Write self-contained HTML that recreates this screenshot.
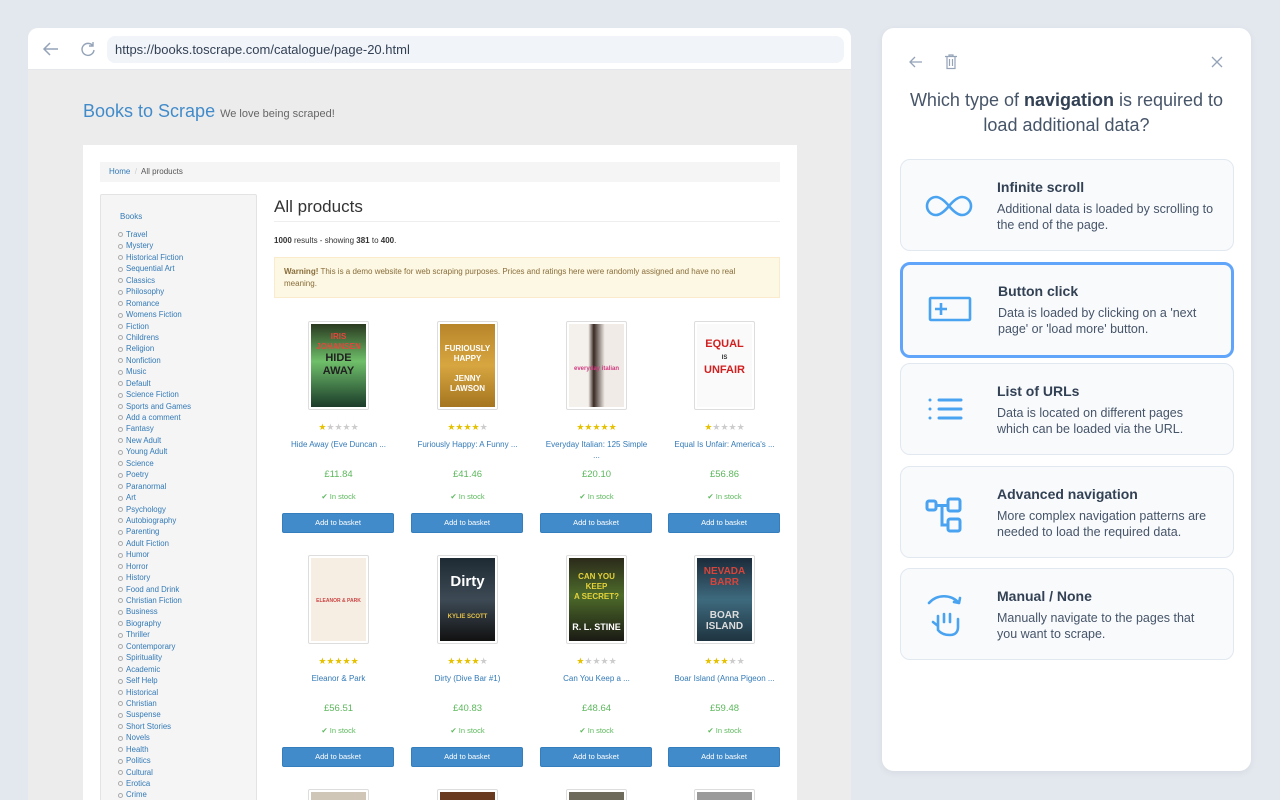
<!DOCTYPE html>
<html><head><meta charset="utf-8"><style>
*{box-sizing:border-box;margin:0;padding:0}
body{width:1280px;height:800px;overflow:hidden;background:#e3e8ef;font-family:"Liberation Sans",sans-serif;position:relative}
.abs{position:absolute}
#win{left:28px;top:28px;width:823px;height:772px;background:#ececec;border-radius:10px 10px 0 0;overflow:hidden}
#bar{left:0;top:0;width:823px;height:42px;background:#fff;border-bottom:1px solid #e5e7eb}
#url{left:79px;top:8px;width:737px;height:27px;border-radius:8px;background:#f1f4f8;font-size:13px;color:#334155;padding:6px 8px;line-height:15px}
#page{left:55px;top:117px;width:714px;height:655px;background:#fff;overflow:hidden}
.bc{left:17px;top:17px;width:680px;height:20px;background:#f5f5f5;font-size:8px;line-height:20px;padding-left:9px;color:#555}
.bc a{color:#337ab7}
#side{position:absolute;left:17px;top:49px;width:157px;height:700px;border:1px solid #e3e3e3;background:#f5f5f5;border-radius:2px}
#side .b{position:absolute;left:19px;top:17px;font-size:8px;color:#337ab7}
#side ul{position:absolute;left:17px;top:34px;list-style:none}
#side li{font-size:7.8px;line-height:11.43px;color:#337ab7;white-space:nowrap}
#side li:before{content:"";display:inline-block;width:3px;height:3px;border:0.6px solid #aaa;border-radius:50%;margin-right:3px;vertical-align:middle}
.h1{left:191px;top:52px;font-size:17px;color:#333}
.hr{left:191px;top:76px;width:506px;height:1px;background:#eee}
.res{left:191px;top:91px;font-size:8px;color:#333}
.warn{left:191px;top:112px;width:506px;height:41px;background:#fcf8e3;border:1px solid #faebcc;font-size:8px;color:#8a6d3b;padding:8px 9px;line-height:12px}
.prod{position:absolute;width:129px;text-align:center}
.cov{position:absolute;left:34px;width:61px;height:89px;border:1px solid #ddd;border-radius:2px;padding:2px;background:#fff}
.cov div{width:100%;height:100%;overflow:hidden;font-size:8px;font-weight:bold;line-height:10px;padding-top:8px}
.st{position:absolute;top:101px;width:100%;font-size:9px;color:#ccc}
.st b{color:#e6c100;font-weight:normal}
.tt{position:absolute;top:118px;width:100%;font-size:8px;color:#337ab7;white-space:nowrap;line-height:11px}
.pr{position:absolute;top:148px;width:100%;font-size:9.5px;color:#5cb85c}
.is{position:absolute;top:171px;width:100%;font-size:7.5px;color:#5cb85c}
.btn{position:absolute;top:192px;left:8px;width:112px;height:20px;background:#428bca;border-radius:2px;color:#fff;font-size:7.5px;line-height:18px;border:1px solid #357ebd}
#panel{left:882px;top:28px;width:369px;height:743px;background:#fff;border-radius:12px;box-shadow:0 2px 8px rgba(0,0,0,.06)}
.q{left:0;top:60px;width:369px;text-align:center;font-size:18px;line-height:25px;color:#475569}
.q b{color:#334155}
.card{position:absolute;left:18px;width:334px;height:92px;background:#f8fafc;border:1px solid #e2e8f0;border-radius:10px}
.card.sel{border:3px solid #60a5fa;height:96px}
.card h3{position:absolute;left:96px;top:19px;font-size:14px;color:#334155}
.card p{position:absolute;left:96px;top:41px;font-size:12.5px;line-height:16px;color:#475569;width:218px}
.card svg{position:absolute;left:20px;top:21px}
</style></head><body>
<div id="win" class="abs">
 <div id="bar" class="abs">
  <svg class="abs" style="left:14px;top:13px" width="18" height="16" viewBox="0 0 18 16"><path d="M16 8H2M8 2L2 8l6 6" fill="none" stroke="#94a3b8" stroke-width="1.5"/></svg>
  <svg class="abs" style="left:52px;top:13px" width="16" height="16" viewBox="0 0 16 16"><path d="M13 5A6 6 0 1 0 14 9M13 1v4H9" fill="none" stroke="#94a3b8" stroke-width="1.4"/></svg>
  <div id="url" class="abs">https://books.toscrape.com/catalogue/page-20.html</div>
 </div>
 <div class="abs" style="left:55px;top:73px;font-size:18px;color:#428bca">Books to Scrape <span style="font-size:11px;color:#666">We love being scraped!</span></div>
 <div id="page" class="abs">
  <div class="bc abs"><a>Home</a> <span style="color:#ccc">&nbsp;/&nbsp;</span> All products</div>
  <div id="side"><div class="b">Books</div><ul>
  <li>Travel</li><li>Mystery</li><li>Historical Fiction</li><li>Sequential Art</li><li>Classics</li><li>Philosophy</li><li>Romance</li><li>Womens Fiction</li><li>Fiction</li><li>Childrens</li><li>Religion</li><li>Nonfiction</li><li>Music</li><li>Default</li><li>Science Fiction</li><li>Sports and Games</li><li>Add a comment</li><li>Fantasy</li><li>New Adult</li><li>Young Adult</li><li>Science</li><li>Poetry</li><li>Paranormal</li><li>Art</li><li>Psychology</li><li>Autobiography</li><li>Parenting</li><li>Adult Fiction</li><li>Humor</li><li>Horror</li><li>History</li><li>Food and Drink</li><li>Christian Fiction</li><li>Business</li><li>Biography</li><li>Thriller</li><li>Contemporary</li><li>Spirituality</li><li>Academic</li><li>Self Help</li><li>Historical</li><li>Christian</li><li>Suspense</li><li>Short Stories</li><li>Novels</li><li>Health</li><li>Politics</li><li>Cultural</li><li>Erotica</li><li>Crime</li></ul></div>
  <div class="h1 abs">All products</div>
  <div class="hr abs"></div>
  <div class="res abs"><b>1000</b> results - showing <b>381</b> to <b>400</b>.</div>
  <div class="warn abs"><b>Warning!</b> This is a demo website for web scraping purposes. Prices and ratings here were randomly assigned and have no real meaning.</div>

  <div class="prod" style="left:191px;top:176px"><div class="cov" style="top:0"><div style="background:linear-gradient(#2a3a20,#6fbf6a 45%,#1b3b2a);color:#e8453c">IRIS<br>JOHANSEN<br><span style="color:#222;font-size:11px;line-height:13px">HIDE<br>AWAY</span></div></div><div class="st"><b>★</b>★★★★</div><div class="tt">Hide Away (Eve Duncan ...</div><div class="pr">£11.84</div><div class="is">✔ In stock</div><div class="btn">Add to basket</div></div>
  <div class="prod" style="left:320px;top:176px"><div class="cov" style="top:0"><div style="background:linear-gradient(#b8862a,#d7a640 50%,#a57520);color:#fff;padding-top:20px">FURIOUSLY<br>HAPPY<br><br>JENNY<br>LAWSON</div></div><div class="st"><b>★★★★</b>★</div><div class="tt">Furiously Happy: A Funny ...</div><div class="pr">£41.46</div><div class="is">✔ In stock</div><div class="btn">Add to basket</div></div>
  <div class="prod" style="left:449px;top:176px"><div class="cov" style="top:0"><div style="background:linear-gradient(90deg,#f4f0ec 35%,#3a2a24 45%,#f0ebe6 65%);color:#d03a80;padding-top:40px;font-size:6px">everyday italian</div></div><div class="st"><b>★★★★★</b></div><div class="tt">Everyday Italian: 125 Simple<br>...</div><div class="pr">£20.10</div><div class="is">✔ In stock</div><div class="btn">Add to basket</div></div>
  <div class="prod" style="left:577px;top:176px"><div class="cov" style="top:0"><div style="background:#fafafa;color:#d02020;font-size:11px;line-height:12px;padding-top:14px">EQUAL<br><span style="color:#333;font-size:6px">IS</span><br>UNFAIR</div></div><div class="st"><b>★</b>★★★★</div><div class="tt">Equal Is Unfair: America's ...</div><div class="pr">£56.86</div><div class="is">✔ In stock</div><div class="btn">Add to basket</div></div>

  <div class="prod" style="left:191px;top:410px"><div class="cov" style="top:0"><div style="background:#f6eee2;color:#c44;font-size:5px;padding-top:38px">ELEANOR &amp; PARK</div></div><div class="st"><b>★★★★★</b></div><div class="tt">Eleanor &amp; Park</div><div class="pr">£56.51</div><div class="is">✔ In stock</div><div class="btn">Add to basket</div></div>
  <div class="prod" style="left:320px;top:410px"><div class="cov" style="top:0"><div style="background:linear-gradient(#1e2a33,#3d4a55 50%,#111);color:#fff;font-size:15px;line-height:16px;padding-top:16px">Dirty<br><br><span style="font-size:6px;color:#e5c24a">KYLIE SCOTT</span></div></div><div class="st"><b>★★★★</b>★</div><div class="tt">Dirty (Dive Bar #1)</div><div class="pr">£40.83</div><div class="is">✔ In stock</div><div class="btn">Add to basket</div></div>
  <div class="prod" style="left:449px;top:410px"><div class="cov" style="top:0"><div style="background:linear-gradient(#2b2a1a,#4d6b2a 45%,#1a1a14);color:#e5d23a;padding-top:14px">CAN YOU KEEP<br>A SECRET?<br><br><br><span style="color:#fff;font-size:9px">R. L. STINE</span></div></div><div class="st"><b>★</b>★★★★</div><div class="tt">Can You Keep a ...</div><div class="pr">£48.64</div><div class="is">✔ In stock</div><div class="btn">Add to basket</div></div>
  <div class="prod" style="left:577px;top:410px"><div class="cov" style="top:0"><div style="background:linear-gradient(#1b2b3a,#3e6a7e 50%,#1f3440);color:#d8443a;font-size:10px;line-height:11px">NEVADA<br>BARR<br><br><br><span style="color:#ddd">BOAR<br>ISLAND</span></div></div><div class="st"><b>★★★</b>★★</div><div class="tt">Boar Island (Anna Pigeon ...</div><div class="pr">£59.48</div><div class="is">✔ In stock</div><div class="btn">Add to basket</div></div>

  <div class="prod" style="left:191px;top:644px"><div class="cov" style="top:0"><div style="background:#cfc6b8"></div></div></div>
  <div class="prod" style="left:320px;top:644px"><div class="cov" style="top:0"><div style="background:#6a3a20"></div></div></div>
  <div class="prod" style="left:449px;top:644px"><div class="cov" style="top:0"><div style="background:#6d6a5c"></div></div></div>
  <div class="prod" style="left:577px;top:644px"><div class="cov" style="top:0"><div style="background:#9a9a9a"></div></div></div>
 </div>
</div>

<div id="panel" class="abs">
 <svg class="abs" style="left:26px;top:27px" width="16" height="14" viewBox="0 0 16 14"><path d="M14 7H2M7 2L2 7l5 5" fill="none" stroke="#94a3b8" stroke-width="1.3"/></svg>
 <svg class="abs" style="left:62px;top:26px" width="14" height="16" viewBox="0 0 14 16"><path d="M1 2.5h12M3 2.5V14.5h8V2.5M5.5 5v7M8.5 5v7M5 2.5V1h4v1.5" fill="none" stroke="#94a3b8" stroke-width="1.2"/></svg>
 <svg class="abs" style="left:329px;top:28px" width="12" height="12" viewBox="0 0 12 12"><path d="M1 1l10 10M11 1L1 11" stroke="#94a3b8" stroke-width="1.3"/></svg>
 <div class="q abs">Which type of <b>navigation</b> is required to<br>load additional data?</div>

 <div class="card" style="top:131px"><svg width="56" height="50" viewBox="0 0 56 50"><path d="M28 25c-5-6-9-9-13-9a9 9 0 0 0 0 18c4 0 8-3 13-9s9-9 13-9a9 9 0 0 1 0 18c-4 0-8-3-13-9z" fill="none" stroke="#4aa3f0" stroke-width="2.6"/></svg><h3>Infinite scroll</h3><p>Additional data is loaded by scrolling to the end of the page.</p></div>
 <div class="card sel" style="top:234px"><svg width="56" height="50" viewBox="0 0 56 50" style="left:18px;top:19px"><rect x="9" y="14" width="40" height="22" rx="1" fill="none" stroke="#4aa3f0" stroke-width="2.6"/><path d="M14 25h12M20 19v12" stroke="#4aa3f0" stroke-width="2.6"/></svg><h3 style="left:95px;top:18px">Button click</h3><p style="left:95px;top:40px">Data is loaded by clicking on a 'next page' or 'load more' button.</p></div>
 <div class="card" style="top:335px"><svg width="56" height="50" viewBox="0 0 56 50"><path d="M9 15h0M9 24h0M9 33h0" stroke="#4aa3f0" stroke-width="3" stroke-linecap="round"/><path d="M18 15h22M18 24h22M18 33h22" stroke="#4aa3f0" stroke-width="3" stroke-linecap="round"/></svg><h3>List of URLs</h3><p>Data is located on different pages which can be loaded via the URL.</p></div>
 <div class="card" style="top:438px"><svg width="56" height="50" viewBox="0 0 56 50"><g fill="none" stroke="#4aa3f0" stroke-width="3"><rect x="6" y="13" width="9" height="9" rx="2"/><rect x="27" y="11" width="12" height="12" rx="2"/><rect x="27" y="31" width="12" height="12" rx="2"/><path d="M15 17.5h12M21 17.5V37h6"/></g></svg><h3>Advanced navigation</h3><p>More complex navigation patterns are needed to load the required data.</p></div>
 <div class="card" style="top:540px"><svg width="56" height="50" viewBox="0 0 56 50"><g fill="none" stroke="#4aa3f0" stroke-width="2.6" stroke-linecap="round" stroke-linejoin="round"><path d="M8 13c8-9 22-9 30 0M38 13l-5-1M38 13l1-5"/><path d="M17 26v14c3 4 7 5 12 5 6 0 8-4 8-8v-8M23 24v8M29 24v8M17 36l-5-4"/></g></svg><h3>Manual / None</h3><p>Manually navigate to the pages that you want to scrape.</p></div>
</div>
</body></html>
